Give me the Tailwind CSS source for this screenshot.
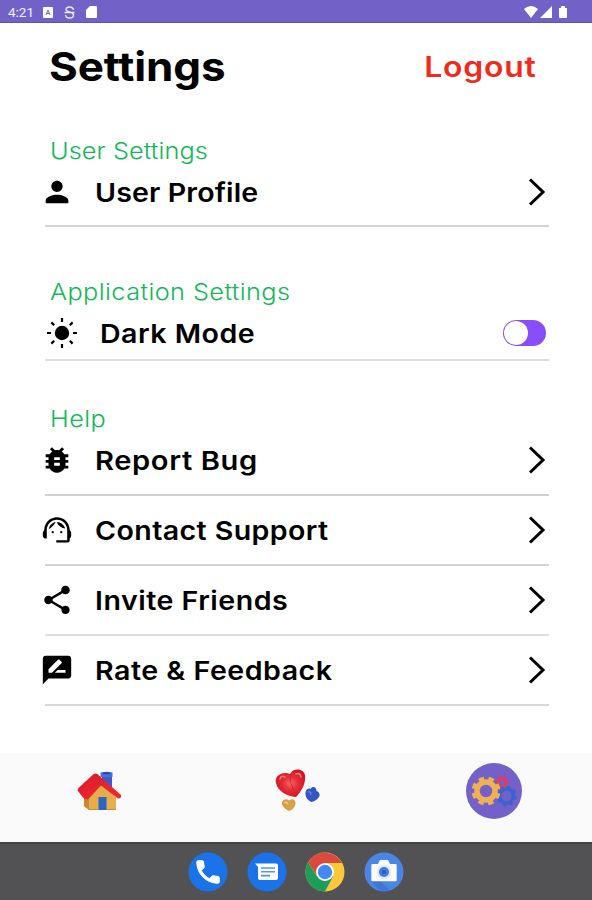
<!DOCTYPE html>
<html lang="en">
<head>
<meta charset="utf-8">
<title>Settings</title>
<script src="https://cdn.jsdelivr.net/npm/@tailwindcss/browser@4"></script>
</head>
<body class="w-[592px] h-[900px] overflow-hidden bg-white text-black font-['Inter',sans-serif]">
<svg class="hidden">
  <symbol id="chev" viewBox="0 0 20 30"><path d="M3 2.500 16 15 3 27.500" fill="none" stroke="#000" stroke-width="3"/></symbol>
</svg>
<div class="flex flex-col h-[900px]">
  <div class="h-[23px] shrink-0 bg-[#7262c8] border-b border-[#6450bb] flex items-center text-white pl-2 pr-[25px]">
    <span class="font-['Roboto',sans-serif] text-[13.500px] w-[35px] pt-[3px] leading-none text-white/90">4:21</span>
    <svg class="w-[10px] h-[11px] mt-[2px]" viewBox="0 0 10 11"><rect width="10" height="11" rx="1" fill="#fff"/><path d="M3 8 5 3 7 8M3.600 6.500h2.800" stroke="#7262c8" fill="none"/></svg>
    <svg class="w-[11px] h-[13px] ml-[11px] mt-[2px]" viewBox="0 0 11 13" fill="none" stroke="#fff" stroke-opacity=".85" stroke-width="1.400"><path d="M9.500 4C9 0 2 0 2 3.500 2 6.500 9.500 5.500 9.500 9 9.500 13 2 13 1.500 9M.5 6.500H10.500"/></svg>
    <svg class="w-[11px] h-[12px] ml-[11px] mt-[2px]" viewBox="0 0 11 12"><path d="M4 0h6a1 1 0 0 1 1 1v10a1 1 0 0 1-1 1H1a1 1 0 0 1-1-1V4z" fill="#fff"/></svg>
    <svg class="w-[43px] h-[13px] ml-auto mt-[2px]" viewBox="0 0 43 13" fill="#fff"><path d="M0 3Q7-3 14 3L7 12zM28 0v12H16zM35 2h2V0h4v2h2v9a1 1 0 0 1-1 1h-6a1 1 0 0 1-1-1z"/></svg>
  </div>
  <header class="h-[90px] shrink-0 flex items-center justify-between pl-[49px] pr-[55px]">
    <h1 class="text-[40px] font-bold tracking-[-0.100px] scale-x-[1.1] origin-left -mt-[2px]">Settings</h1>
    <span class="text-[28px] font-semibold text-[#f02a1c] tracking-[0.700px] scale-x-[1.14] origin-right -mt-[2px]">Logout</span>
  </header>
  <main class="h-[640px] shrink-0 pl-[45px] pr-[43px]">
    <h2 class="mt-[23px] h-[30px] pl-[5px] text-[23px] leading-[30px] font-light text-[#12b75a]"><span class="inline-block origin-left scale-x-[1.1] tracking-[0.080px]">User Settings</span></h2>
    <div class="h-[61px] pb-[7px] flex items-center border-b-2 border-[#d4d4d4]">
      <svg class="w-[34px] h-[34px] -ml-[5px] mr-[21px]" viewBox="0 0 24 24"><path d="M12 12c2.210 0 4-1.790 4-4s-1.790-4-4-4-4 1.790-4 4 1.790 4 4 4zm0 2c-2.670 0-8 1.340-8 4v2h16v-2c0-2.660-5.330-4-8-4z"/></svg>
      <span class="text-[26px] font-semibold origin-left scale-x-[1.1] tracking-[0.100px]">User Profile</span>
      <svg class="w-5 h-[30px] ml-auto mr-[2px]"><use href="#chev"/></svg>
    </div>
    <h2 class="mt-[50px] h-[30px] pl-[5px] text-[23px] leading-[30px] font-light text-[#12b75a]"><span class="inline-block origin-left scale-x-[1.1] tracking-[0.370px]">Application Settings</span></h2>
    <div class="h-[54px] flex items-center border-b-2 border-[#dedede]">
      <svg class="w-8 h-8 ml-[1px] mr-[22px]" viewBox="0 0 32 32"><circle cx="16" cy="16" r="7.200"/><path d="M16 1v4M16 27v4M1 16h4M27 16h4M5.400 5.400l2.800 2.800M23.800 23.800l2.800 2.800M5.400 26.600l2.800-2.800M23.800 8.200l2.800-2.800" stroke="#000" stroke-width="2.200"/></svg>
      <span class="text-[26px] font-semibold origin-left scale-x-[1.1] tracking-[0.420px]">Dark Mode</span>
      <span class="ml-auto mr-[3px] w-[43px] h-[26px] rounded-full bg-[#8a4dfb] flex items-center p-[1px]"><i class="block size-6 rounded-full bg-white"></i></span>
    </div>
    <h2 class="mt-[43px] h-[30px] pl-[5px] text-[23px] leading-[30px] font-light text-[#12b75a]"><span class="inline-block origin-left scale-x-[1.1] tracking-[0.400px]">Help</span></h2>
    <div class="h-[62px] pb-[8px] flex items-center border-b-2 border-[#d0d0d0]">
      <svg class="w-[34px] h-[34px] -ml-[5px] mr-[21px]" viewBox="0 0 24 24"><path d="M20 8h-2.810c-.45-.78-1.070-1.450-1.820-1.960L17 4.410 15.590 3l-2.170 2.170C12.960 5.060 12.490 5 12 5c-.49 0-.96.06-1.410.17L8.410 3 7 4.410l1.620 1.630C7.880 6.550 7.260 7.220 6.810 8H4v2h2.090c-.05.33-.09.66-.09 1v1H4v2h2v1c0 .34.04.67.09 1H4v2h2.810c1.040 1.790 2.970 3 5.190 3s4.150-1.210 5.190-3H20v-2h-2.090c.05-.33.09-.66.09-1v-1h2v-2h-2v-1c0-.34-.04-.67-.09-1H20V8zm-6 8h-4v-2h4v2zm0-4h-4v-2h4v2z"/></svg>
      <span class="text-[26px] font-semibold origin-left scale-x-[1.12] tracking-[0.550px]">Report Bug</span>
      <svg class="w-5 h-[30px] ml-auto mr-[2px]"><use href="#chev"/></svg>
    </div>
    <div class="h-[70px] flex items-center border-b-2 border-[#d4d4d4]">
      <svg class="w-[34px] h-[34px] -ml-[5px] mr-[21px]" viewBox="0 0 24 24"><path d="M21 12.220C21 6.730 16.740 3 12 3c-4.690 0-9 3.650-9 9.280-.6.34-1 .98-1 1.720v2c0 1.100.9 2 2 2h.8v-6.100C4.800 8 8 4.800 12 4.800s7.200 3.200 7.200 7.100V19.300h-7.700v1.500h8c1.100 0 1.500-.7 1.500-1.800v-1.220c.59-.31 1-.92 1-1.640v-2.300c0-.7-.41-1.310-1-1.620z"/><circle cx="9" cy="13.500" r=".8"/><circle cx="15" cy="13.500" r=".8"/><path d="M6.200 11.500C6.600 8.800 8.500 6.800 11 6.300 10.300 8 8.600 9.800 6.200 11.500zM11.800 6.500C14.500 6.200 17 8.200 17.800 11 15.200 10.600 13 9 11.800 6.500z"/></svg>
      <span class="text-[26px] font-semibold origin-left scale-x-[1.1] tracking-[0.350px]">Contact Support</span>
      <svg class="w-5 h-[30px] ml-auto mr-[2px]"><use href="#chev"/></svg>
    </div>
    <div class="h-[70px] flex items-center border-b-2 border-[#dedede]">
      <svg class="w-[34px] h-[34px] -ml-[5px] mr-[21px]" viewBox="0 0 24 24"><path d="M18 16.080c-.76 0-1.440.3-1.960.77L8.910 12.700c.05-.23.09-.46.09-.7s-.04-.47-.09-.7l7.050-4.110c.54.5 1.250.81 2.040.81 1.660 0 3-1.340 3-3s-1.340-3-3-3-3 1.340-3 3c0 .24.04.47.09.7L8.040 9.810C7.500 9.310 6.790 9 6 9c-1.660 0-3 1.340-3 3s1.340 3 3 3c.79 0 1.500-.31 2.040-.81l7.120 4.160c-.05.21-.08.43-.08.65 0 1.610 1.310 2.920 2.920 2.920s2.920-1.310 2.920-2.920-1.310-2.920-2.920-2.920z"/></svg>
      <span class="text-[26px] font-semibold origin-left scale-x-[1.1] tracking-[0.440px]">Invite Friends</span>
      <svg class="w-5 h-[30px] ml-auto mr-[2px]"><use href="#chev"/></svg>
    </div>
    <div class="h-[70px] flex items-center border-b-2 border-[#d8d8d8]">
      <svg class="w-[34px] h-[34px] -ml-[5px] mr-[21px]" viewBox="0 0 24 24"><path d="M20 2H4c-1.100 0-1.990.9-1.990 2L2 22l4-4h14c1.100 0 2-.9 2-2V4c0-1.100-.9-2-2-2zM6 14v-2.470l6.880-6.880c.2-.2.51-.2.71 0l1.770 1.770c.2.2.2.51 0 .71L8.470 14H6zm12 0h-7.500l2-2H18v2z"/></svg>
      <span class="text-[26px] font-semibold origin-left scale-x-[1.1] tracking-[0.450px]">Rate &amp; Feedback</span>
      <svg class="w-5 h-[30px] ml-auto mr-[2px]"><use href="#chev"/></svg>
    </div>
  </main>
  <nav class="h-[89px] shrink-0 bg-[#fafafa] flex items-start justify-between pl-[76px] pr-[70px] pt-[10px]">
    <svg class="w-[46px] h-[42px] mt-[7px]" viewBox="0 0 46 42">
      <defs><linearGradient id="roof" x1="0" y1="0" x2="1" y2="1"><stop offset="0" stop-color="#d81c2a"/><stop offset="1" stop-color="#f02c32"/></linearGradient></defs>
      <path d="M26 3h10v22L26 17z" fill="#3b5cc9"/><path d="M24.500 2.500Q31 1 36.500 2.500V7H24.500z" fill="#4a6fe0"/><ellipse cx="30.500" cy="3.300" rx="4" ry="1" fill="#2944a6"/>
      <path d="M8 26 22 12 40 27V40H13L8 36z" fill="#e6ad4b"/><path d="M8 25 13 28V40L8 36z" fill="#c98932"/>
      <path d="M17 4.500Q20 2.500 22 4.500L45 25Q45.500 29 42 28.500L25 15.500 12 29.500Q8 29.500 5 25L1.500 20.500Q1.300 19 3 17.500z" fill="url(#roof)"/>
      <path d="M21 5.500 25 15" fill="none" stroke="#b81425" stroke-opacity=".4"/>
      <rect x="22.500" y="27" width="8" height="13" fill="#2e63c6"/><path d="M13 39.500h9M31 39.500h9" stroke="#c99135"/>
    </svg>
    <svg class="w-[46px] h-[43px] mt-[6px] ml-[5px]" viewBox="0 0 46 43">
      <defs><radialGradient id="hr"><stop offset="0" stop-color="#f46a67"/><stop offset=".45" stop-color="#e93238"/><stop offset="1" stop-color="#d1182a"/></radialGradient></defs>
      <path d="M16 5C19-1 29-1 31 6 32 14 28 22 22 28 13 27 4 23 2 14 0 5 11 2 16 5z" fill="url(#hr)"/>
      <path d="M16 5Q15 13 20 22" fill="none" stroke="#c2162a" stroke-opacity=".7"/><path d="M22 5Q26 3 27 8M6 10Q7 6 11 8" fill="none" stroke="#ff9187" stroke-opacity=".8" stroke-width="1.500" stroke-linecap="round"/>
      <path d="M36.500 20C38.500 16.500 42.500 18 42.500 22 45 22.500 46.500 25.500 45 28 43 31 40 32.500 37 33 33 30.500 31 28 31.500 23.500 32 20 35 18.500 36.500 20z" fill="#3655c4"/><path d="M34 23Q37 22 37 26" stroke="#7797f0" stroke-opacity=".7" fill="none" stroke-width="1.500"/>
      <path d="M15 31.500C18 28.500 22 31 21.500 35 20.500 39 18 41 15 42 11 40 7.500 37 8 33.500 9 30 13 29.500 15 31.500z" fill="#d7a146"/><path d="M10.500 34Q12 32 14 35" stroke="#f2cb7c" fill="none" stroke-width="1.500"/>
    </svg>
    <svg class="size-14" viewBox="0 0 56 56">
      <circle cx="28" cy="28" r="28" fill="#7360c9"/>
      <g fill="none"><circle cx="36" cy="19.500" r="4" stroke="#d64062" stroke-width="3"/><circle cx="36" cy="19.500" r="6" stroke="#d64062" stroke-width="2" stroke-dasharray="2.400 2.300"/>
      <circle cx="40.500" cy="33" r="7" stroke="#3b63d0" stroke-width="3.500"/><circle cx="40.500" cy="33" r="9.200" stroke="#3b63d0" stroke-width="2" stroke-dasharray="4 3.220"/>
      <circle cx="20" cy="28" r="9" stroke="#efb253" stroke-width="5.500"/><circle cx="20" cy="28" r="12.500" stroke="#efb253" stroke-width="4" stroke-dasharray="5.400 4.420" transform="rotate(10 20 28)"/></g>
    </svg>
  </nav>
  <footer class="h-[58px] shrink-0 bg-[#525255] border-t-2 border-[#434346] flex items-center justify-center gap-[18.500px]">
    <svg class="size-10" viewBox="0 0 40 40"><circle cx="20" cy="20" r="19.500" fill="#1a73e8"/><g transform="translate(5 5) scale(1.250)"><path d="M6.620 10.790c1.440 2.830 3.760 5.140 6.590 6.590l2.200-2.200c.27-.27.67-.36 1.020-.24 1.120.37 2.330.57 3.570.57.55 0 1 .45 1 1V20c0 .55-.45 1-1 1-9.390 0-17-7.610-17-17 0-.55.45-1 1-1h3.500c.55 0 1 .45 1 1 0 1.250.2 2.450.57 3.570.11.35.03.74-.25 1.020l-2.200 2.200z" fill="#fff" stroke="#fff" stroke-width=".8"/></g></svg>
    <svg class="size-10" viewBox="0 0 40 40"><circle cx="20" cy="20" r="19.500" fill="#1a73e8"/><path d="M8 11.500H29a2 2 0 0 1 2 2V26a2 2 0 0 1-2 2H13a2 2 0 0 1-2-2V15z" fill="#fff"/><path d="M14 16h14M14 19.800h14M14 23.600h9" stroke="#5792ec" stroke-width="1.600"/></svg>
    <svg class="size-10" viewBox="0 0 40 40"><circle cx="20" cy="20" r="19.500" fill="#fbc83c"/><path d="M3.100 10.300A19.500 19.500 0 0 1 36.900 11H20L12 24z" fill="#db4a3d"/><path d="M3.100 10.300A19.500 19.500 0 0 0 20 39.500L28 24.500H12z" fill="#1b9e59"/><circle cx="20" cy="20" r="9" fill="#fff"/><circle cx="20" cy="20" r="7.200" fill="#4587f3"/></svg>
    <svg class="size-10" viewBox="0 0 40 40"><circle cx="20" cy="20" r="19.500" fill="#4a86e8"/><path d="M7.500 29 14 37A19.500 19.500 0 0 0 26 38.500L16 29z" fill="#3f75d4"/><path d="M8.500 12H14l2-4h8l2 4h5.500a1.200 1.200 0 0 1 1.200 1.200V28a1.200 1.200 0 0 1-1.200 1.200h-23A1.200 1.200 0 0 1 7.300 28V13.200A1.200 1.200 0 0 1 8.500 12z" fill="#fafafa"/><circle cx="20" cy="20" r="7" fill="#e4e7ea"/><circle cx="20" cy="20" r="5" fill="#3f7de0"/><circle cx="20" cy="20" r="2.200" fill="#2e62bd"/></svg>
  </footer>
</div>
</body>
</html>
